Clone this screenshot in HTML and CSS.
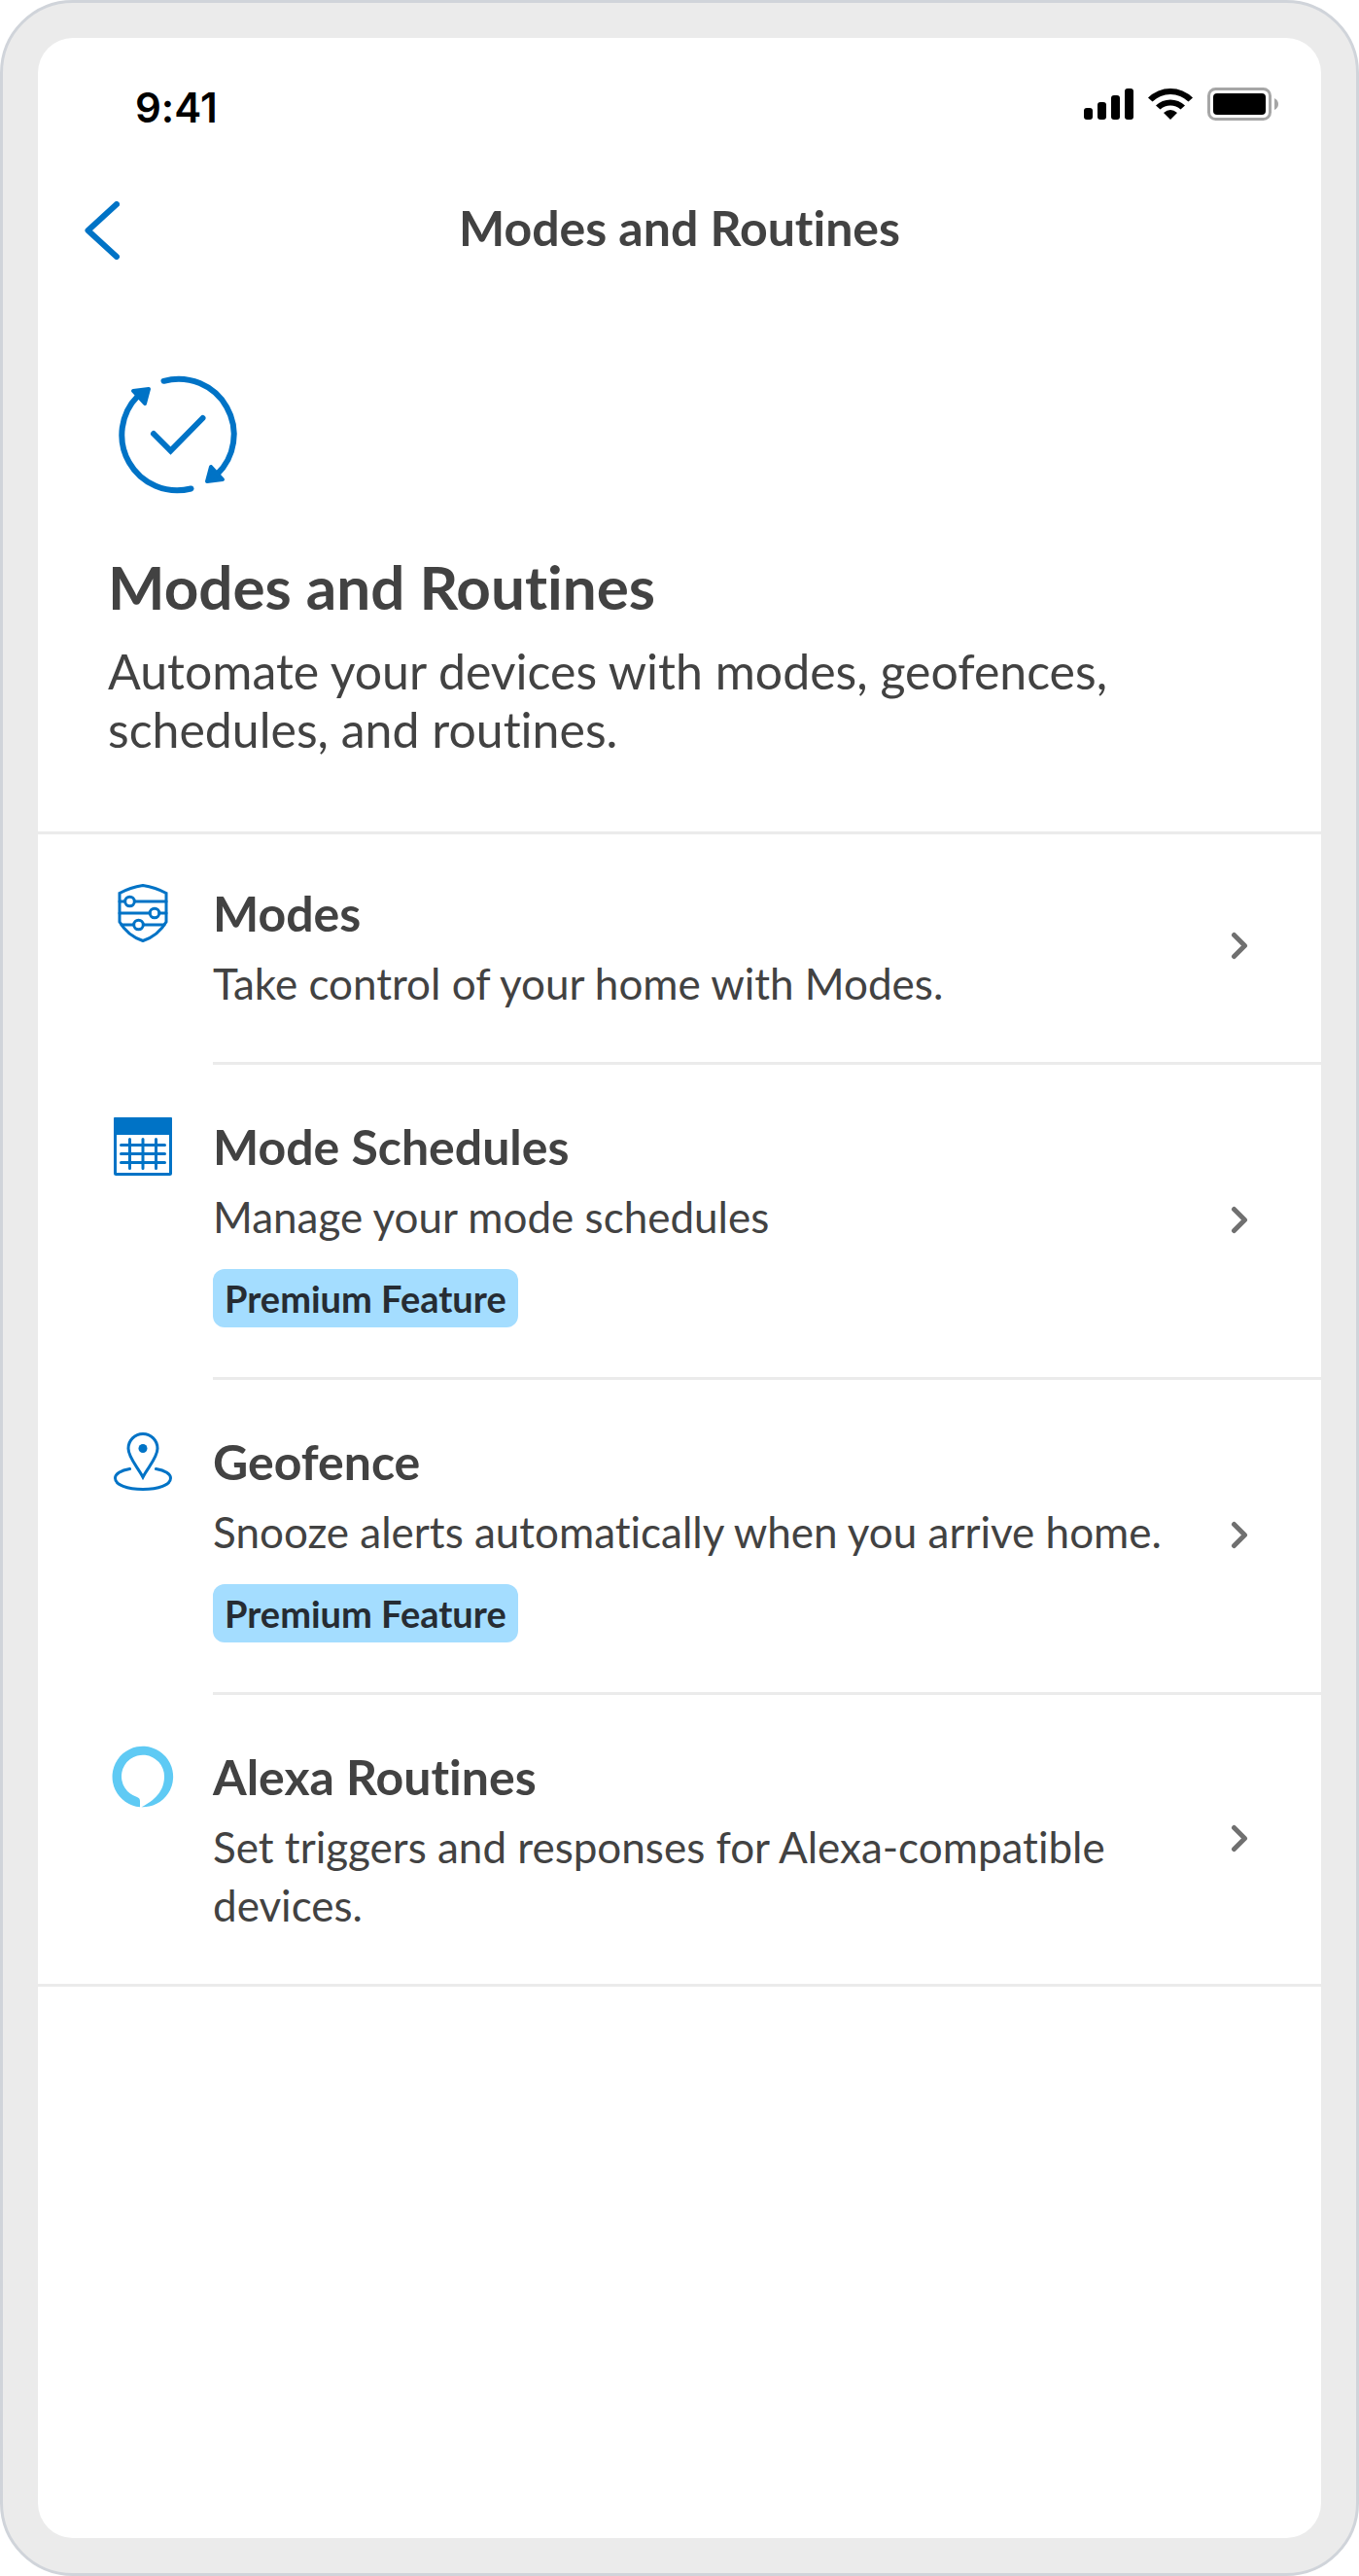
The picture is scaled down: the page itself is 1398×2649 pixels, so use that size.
FILE: index.html
```
<!DOCTYPE html>
<html lang="en">
   <head>
      <meta charset="utf-8">
      <meta name="viewport" content="width=device-width, initial-scale=1">
      <title>Modes and Routines</title>
      <link rel="stylesheet" href="styles.css">
   </head>
   <body>
      <div class="phone">
         <div class="screen">
            <!-- Status bar -->
            <div class="status-bar">
               <span class="time">9:41</span>
               <svg class="status-icons" width="200" height="36" viewBox="0 0 200 36" aria-hidden="true">
                  <rect x="0" y="21" width="9" height="12" rx="3"/>
                  <rect x="14" y="15" width="9" height="18" rx="3"/>
                  <rect x="28" y="8" width="9" height="25" rx="3"/>
                  <rect x="42" y="1" width="9" height="32" rx="3"/>
                  <path d="M66 10.500A32.500 32.500 0 0 1 112 10.500L107.500 14.500A26.500 26.500 0 0 0 70.500 14.500Z"/>
                  <path d="M74 18.500A21.500 21.500 0 0 1 104 18.500L99.500 22.500A15.500 15.500 0 0 0 78.500 22.500Z"/>
                  <path d="M82 26Q89 20 96 26L89 33Z"/>
                  <rect x="128.500" y="1.500" width="63" height="31" rx="7" fill="none" stroke="#a6a6a6" stroke-width="3"/>
                  <rect x="133" y="6" width="54" height="22" rx="4"/>
                  <path d="M196 11Q200 13 200 17Q200 21 196 23Z" fill="#a6a6a6"/>
               </svg>
            </div>

            <!-- Navigation header -->
            <header class="nav">
               <button class="btn-back" type="button" aria-label="Back">
                  <svg width="36" height="60" viewBox="0 0 36 60">
                     <path d="M33 3L3.500 30L33 57"/>
                  </svg>
               </button>
               <p class="nav-title">Modes and Routines</p>
            </header>

            <!-- Intro -->
            <section class="intro">
               <svg class="intro-icon" width="144" height="144" viewBox="0 0 144 144" aria-hidden="true">
                  <path class="line" d="M57.500 16.800A57 57 0 0 1 112 113"/>
                  <path class="line" d="M85.500 127.500A57 57 0 0 1 31 32"/>
                  <path class="line" d="M47 71L64.500 88.500L97.500 55"/>
                  <path class="head" d="M26 27L42 25L38 40Z"/>
                  <path class="head" d="M118 118L102 120L106 105Z"/>
               </svg>
               <h1>Modes and Routines</h1>
               <p>Automate your devices with modes, geofences, schedules, and routines.</p>
            </section>

            <!-- Options -->
            <ul class="options">
               <li>
                  <a class="option" href="#modes">
                     <svg class="option-icon" width="72" height="72" viewBox="0 0 72 72" aria-hidden="true">
                        <path d="M36 4.500Q49 6.500 60 12.500V42Q52 56 36 61.500Q20 56 12 42V12.500Q23 6.500 36 4.500Z"/>
                        <path d="M12 21H17.500M27.500 21H60M12 33H43M53 33H60M14 45H26.500M36.500 45H58"/>
                        <circle cx="22.500" cy="21" r="4.800"/>
                        <circle cx="48" cy="33" r="4.800"/>
                        <circle cx="31.500" cy="45" r="4.800"/>
                     </svg>
                     <div class="option-body">
                        <div class="option-text">
                           <h2>Modes</h2>
                           <p>Take control of your home with Modes.</p>
                        </div>
                        <svg class="chevron" width="48" height="48" viewBox="0 0 48 48" aria-hidden="true"><path d="M18.500 13.500L29.500 24.500L18.500 35.500"/></svg>
                     </div>
                  </a>
               </li>
               <li>
                  <a class="option" href="#schedules">
                     <svg class="option-icon" width="72" height="72" viewBox="0 0 72 72" aria-hidden="true">
                        <rect x="7.500" y="7.500" width="57" height="57" rx="1"/>
                        <path class="solid" d="M7 7H65V23H7Z"/>
                        <path d="M13.500 34.500H58.500M13.500 43.500H58.500M13.500 52.500H58.500M22.500 28.500V58.500M36 28.500V58.500M49.500 28.500V58.500"/>
                     </svg>
                     <div class="option-body">
                        <div class="option-text">
                           <h2>Mode Schedules</h2>
                           <p>Manage your mode schedules</p>
                           <span class="badge">Premium Feature</span>
                        </div>
                        <svg class="chevron" width="48" height="48" viewBox="0 0 48 48" aria-hidden="true"><path d="M18.500 13.500L29.500 24.500L18.500 35.500"/></svg>
                     </div>
                  </a>
               </li>
               <li>
                  <a class="option" href="#geofence">
                     <svg class="option-icon" width="72" height="72" viewBox="0 0 72 72" aria-hidden="true">
                        <path d="M36 52C31 42 21 32 21 22.500A15 15 0 0 1 51 22.500C51 32 41 42 36 52Z"/>
                        <circle class="dot" cx="36" cy="22.500" r="4.500"/>
                        <path d="M22.500 43.500C13 45 7.500 49 7.500 53C7.500 60 20 64.500 36 64.500S64.500 60 64.500 53C64.500 49 59 45 49.500 43.500"/>
                     </svg>
                     <div class="option-body">
                        <div class="option-text">
                           <h2>Geofence</h2>
                           <p>Snooze alerts automatically when you arrive home.</p>
                           <span class="badge">Premium Feature</span>
                        </div>
                        <svg class="chevron" width="48" height="48" viewBox="0 0 48 48" aria-hidden="true"><path d="M18.500 13.500L29.500 24.500L18.500 35.500"/></svg>
                     </div>
                  </a>
               </li>
               <li>
                  <a class="option" href="#alexa">
                     <svg class="option-icon alexa" width="72" height="72" viewBox="0 0 72 72" aria-hidden="true">
                        <path d="M33 67.200A31.300 31.300 0 1 1 34.500 67.300C43 63 58 54 58 36A22 22 0 1 0 30 56.900Q33 58 33 61Z"/>
                     </svg>
                     <div class="option-body">
                        <div class="option-text">
                           <h2>Alexa Routines</h2>
                           <p>Set triggers and responses for Alexa-compatible devices.</p>
                        </div>
                        <svg class="chevron" width="48" height="48" viewBox="0 0 48 48" aria-hidden="true"><path d="M18.500 13.500L29.500 24.500L18.500 35.500"/></svg>
                     </div>
                  </a>
               </li>
            </ul>
         </div>
      </div>
   </body>
</html>
```

FILE: styles.css
```
/* Global Styles */
* {
    box-sizing: border-box;
}

body {
    font-family: Lato, "Liberation Sans", sans-serif;
    font-variant-ligatures: none;
    margin: 0;
    background-color: #fff;
    color: #424242;
}

h1, h2, p, ul {
    margin: 0;
    padding: 0;
}

svg {
    display: block;
    flex-shrink: 0;
}

/* Phone Frame */
.phone {
    display: flex;
    min-height: 100vh;
    padding: 36px;
    border: 3px solid #d0d4da;
    border-radius: 75px;
    background-color: #ebebeb;
}

.screen {
    flex: 1;
    min-width: 0;
    border-radius: 36px;
    background-color: #fff;
}

/* Status Bar */
.status-bar {
    display: flex;
    align-items: center;
    justify-content: space-between;
    height: 138px;
    padding: 0 44px 0 100px;
}

.time {
    padding-top: 6px;
    font-family: Inter, sans-serif;
    font-size: 42px;
    font-weight: 600;
    line-height: 60px;
    color: #000;
}

/* Navigation */
.nav {
    display: grid;
    grid-template-columns: 132px 1fr 132px;
    align-items: center;
    height: 120px;
}

.btn-back {
    padding: 0 48px;
    border: none;
    background: none;
    cursor: pointer;
}

.btn-back path {
    fill: none;
    stroke: #0073c6;
    stroke-width: 6;
    stroke-linecap: round;
    stroke-linejoin: round;
}

.nav-title {
    padding-bottom: 6px;
    font-size: 50px;
    font-weight: 700;
    line-height: 60px;
    text-align: center;
}

/* Intro */
.intro {
    padding: 78px 72px 75px;
    border-bottom: 3px solid #ebebeb;
}

.intro-icon {
    margin-bottom: 42px;
}

.intro-icon .line {
    fill: none;
    stroke: #0073c6;
    stroke-width: 6;
    stroke-linecap: round;
}

.intro-icon .head {
    fill: #0073c6;
    stroke: #0073c6;
    stroke-width: 4;
    stroke-linejoin: round;
}

.intro h1 {
    margin-bottom: 15px;
    font-size: 62px;
    font-weight: 700;
    line-height: 84px;
}

.intro p {
    font-size: 50px;
    font-weight: 400;
    line-height: 60px;
}

/* Options List */
.options {
    list-style: none;
    border-bottom: 3px solid #ebebeb;
}

.option {
    display: flex;
    gap: 36px;
    padding-left: 72px;
    color: inherit;
    text-decoration: none;
}

.option-icon {
    margin-top: 48px;
    fill: none;
    stroke: #0073c6;
    stroke-width: 3;
    stroke-linecap: round;
}

.option-icon .solid {
    fill: #0073c6;
    stroke-width: 2;
    stroke-linejoin: round;
}

.option-icon .dot {
    fill: #0073c6;
    stroke: none;
}

.option-icon.alexa {
    fill: #5fcaf4;
    stroke: none;
}

.option-body {
    display: flex;
    flex: 1;
    align-items: center;
    justify-content: space-between;
    gap: 36px;
    padding: 48px 60px 51px 0;
}

.options li:first-child .option-body {
    padding-top: 45px;
}

.options li:not(:last-child) .option-body {
    border-bottom: 3px solid #ebebeb;
}

.option h2 {
    margin-bottom: 6px;
    font-size: 50px;
    font-weight: 700;
    line-height: 72px;
}

.option p {
    font-size: 44px;
    font-weight: 400;
    line-height: 60px;
}

.badge {
    display: inline-block;
    margin-top: 24px;
    padding: 0 12px;
    border-radius: 12px;
    background-color: #a4ddff;
    color: #262c33;
    font-size: 38px;
    font-weight: 700;
    line-height: 60px;
    vertical-align: top;
}

.chevron {
    fill: none;
    stroke: #707070;
    stroke-width: 5;
    stroke-linecap: round;
    stroke-linejoin: round;
}
```
